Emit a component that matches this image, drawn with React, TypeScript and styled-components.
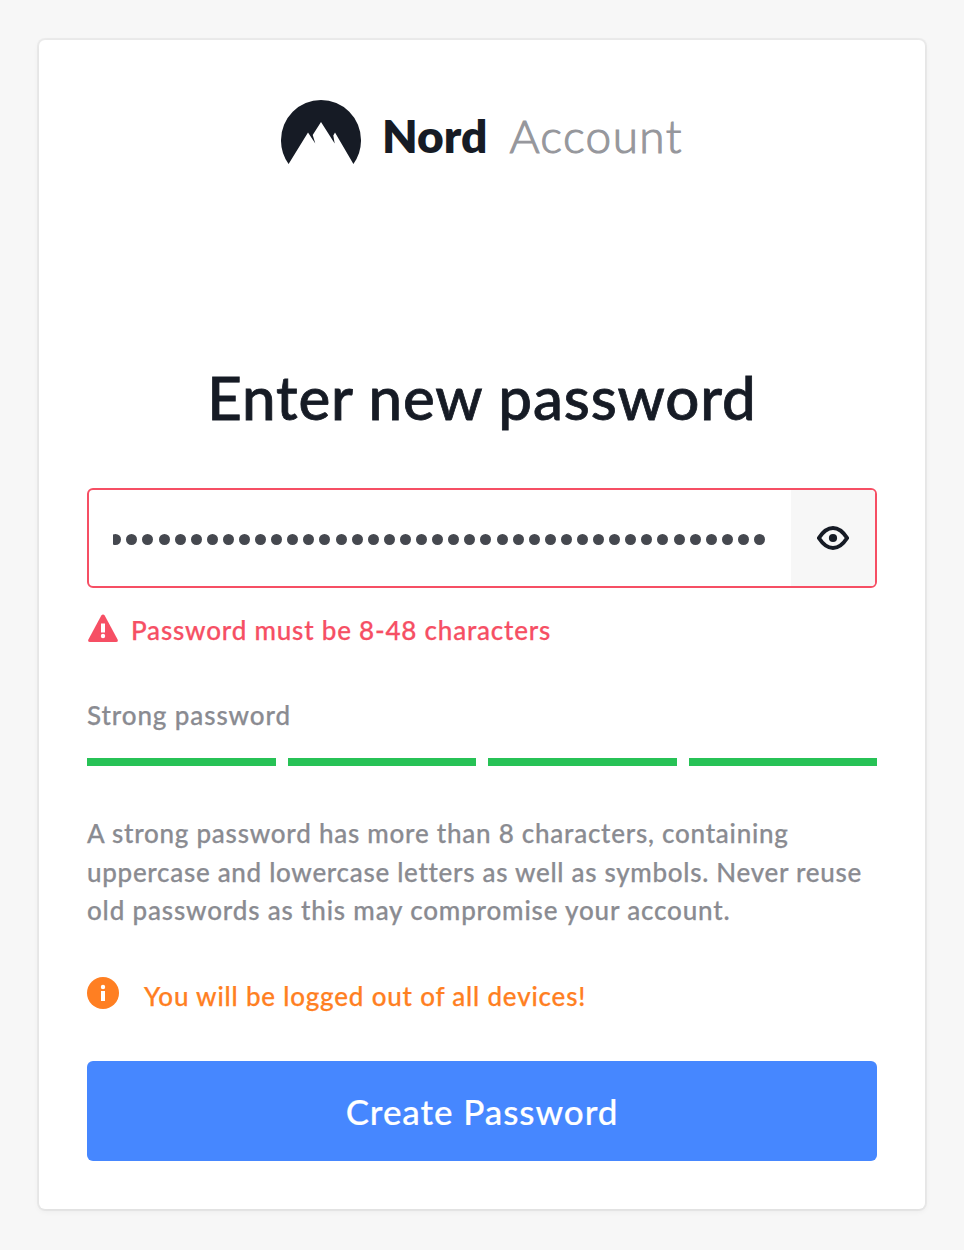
import React from "react";
import styled, { createGlobalStyle } from "styled-components";

const GlobalStyle = createGlobalStyle`
  *, *::before, *::after { box-sizing: border-box; }
  body {
    margin: 0;
    background: #f7f7f7;
    font-family: Lato, "Liberation Sans", sans-serif;
    color: #161b25;
    overflow: hidden;
  }
`;

const Page = styled.main`
  height: 1250px;
  padding: 40px 39px;
`;

const Card = styled.section`
  width: 886px;
  height: 1169px;
  padding: 60px 48px 48px;
  background: #fff;
  border-radius: 6px;
  box-shadow: 0 0 0 2px rgba(0, 0, 0, 0.045), 0 2px 6px rgba(0, 0, 0, 0.06);
`;

const Brand = styled.header`
  display: flex;
  justify-content: flex-start;
  height: 64px;
  padding-left: 194px;
`;

const Line = styled.span<{ $spacing: number; $stroke?: number }>`
  display: inline-block;
  letter-spacing: ${(p) => p.$spacing}px;
  white-space: nowrap;
  -webkit-text-stroke: ${(p) => p.$stroke ?? 0.25}px currentColor;
`;

const BrandName = styled.span`
  margin-left: 21px;
  font-size: 46px;
  font-weight: 800;
  line-height: 72px;
`;

const BrandProduct = styled.span`
  margin-left: 22px;
  font-size: 46px;
  font-weight: 300;
  line-height: 72px;
  color: #96979c;
`;

const Title = styled.h1`
  margin: 197px 0 0;
  height: 72px;
  font-size: 60px;
  font-weight: 500;
  line-height: 72px;
  text-align: center;
`;

const Field = styled.div`
  display: flex;
  height: 100px;
  margin-top: 55px;
  border: 2px solid #f64f64;
  border-radius: 6px;
  overflow: hidden;
`;

const Dots = styled.div`
  display: flex;
  flex: 1;
  align-items: center;
  justify-content: flex-end;
  gap: 5.1px;
  margin: 2px 26px 0 24px;
  overflow: hidden;
`;

const Dot = styled.span`
  flex: none;
  width: 11px;
  height: 11px;
  border-radius: 50%;
  background: #45484f;
`;

const Reveal = styled.button`
  display: grid;
  place-items: center;
  width: 84px;
  padding: 0;
  border: 0;
  background: #f7f7f7;
`;

const ErrorRow = styled.div`
  display: flex;
  height: 38px;
  margin-top: 24px;
  color: #f64f64;
  font-size: 26px;
  font-weight: 500;
  line-height: 36px;
`;

const ErrorText = styled.span`
  margin-left: 12px;
`;

const Strength = styled.div`
  height: 38px;
  margin-top: 47px;
  color: #8a8b91;
  font-size: 26px;
  font-weight: 500;
  line-height: 36px;
`;

const Meter = styled.div`
  display: grid;
  grid-template-columns: repeat(4, 1fr);
  gap: 12px;
  height: 8px;
  margin-top: 23px;
`;

const Segment = styled.span`
  background: #27c256;
`;

const Hint = styled.p`
  margin: 48px 0 0;
  height: 117px;
  color: #8a8b91;
  font-size: 26px;
  font-weight: 500;
  line-height: 38.5px;
`;

const Notice = styled.div`
  display: flex;
  height: 38px;
  margin-top: 46px;
  color: #ff7f22;
  font-size: 26px;
  font-weight: 500;
  line-height: 38px;
`;

const NoticeText = styled.span`
  margin-left: 25px;
`;

const Submit = styled.button`
  display: block;
  width: 100%;
  height: 100px;
  margin-top: 46px;
  padding: 0;
  border: 0;
  border-radius: 6px;
  background: #4687ff;
  color: #fff;
  font-family: inherit;
  font-size: 35px;
  font-weight: 500;
`;

const MountainLogo = () => (
  <svg width="80" height="64" viewBox="0 0 80 64" fill="#161b25">
    <path d="M7.6 64A40.2 40.2 0 0 1 0 40A40 40 0 0 1 80 40A40.2 40.2 0 0 1 72.4 64L54 32.6 52.3 35.5 53.7 43.5 40 22 31.7 35 34.3 43.5 27 32.6Z" />
  </svg>
);

const EyeIcon = () => (
  <svg width="32" height="24" viewBox="0 0 32 24" fill="none">
    <path d="M1.9 12C5.5 6.4 10 2 16 2s10.5 4.4 14.1 10C26.5 17.6 22 22 16 22S5.5 17.6 1.9 12Z" stroke="#161b25" strokeWidth="4" strokeLinejoin="round" />
    <circle cx="16" cy="12" r="4.1" fill="#161b25" />
  </svg>
);

const WarningIcon = () => (
  <svg width="32" height="30" viewBox="0 0 32 30">
    <path d="M14.3 1.5Q16 -.5 17.7 1.5L30.6 25.5Q31.5 28 29 28H3Q.5 28 1.4 25.5Z" fill="#f64f64" />
    <path d="M14 9.5H18V18.5H14Z" fill="#fff" />
    <circle cx="16" cy="22" r="2.2" fill="#fff" />
  </svg>
);

const WarningSlot = styled.span`
  display: block;
  width: 32px;
  padding-top: 2px;
  line-height: 0;
`;

const InfoIcon = () => (
  <svg width="32" height="32" viewBox="0 0 32 32">
    <circle cx="16" cy="16" r="16" fill="#ff7f22" />
    <circle cx="16" cy="10" r="2.2" fill="#fff" />
    <path d="M14 14H18V24H14Z" fill="#fff" />
  </svg>
);

export default function App() {
  return (
    <>
      <GlobalStyle />
      <Page>
        <Card>
          <Brand>
            <MountainLogo />
            <BrandName><Line $spacing={0} $stroke={0}>Nord</Line></BrandName>
            <BrandProduct><Line $spacing={1.4} $stroke={1.1}>Account</Line></BrandProduct>
          </Brand>
          <Title><Line $spacing={0.85} $stroke={0.8}>Enter new password</Line></Title>
          <Field>
            <Dots>
              {Array.from({ length: 41 }, (_, i) => <Dot key={i} />)}
            </Dots>
            <Reveal aria-label="Show password"><EyeIcon /></Reveal>
          </Field>
          <ErrorRow>
            <WarningSlot><WarningIcon /></WarningSlot>
            <ErrorText><Line $spacing={0.8}>Password must be 8-48 characters</Line></ErrorText>
          </ErrorRow>
          <Strength><Line $spacing={0.9}>Strong password</Line></Strength>
          <Meter>
            <Segment /><Segment /><Segment /><Segment />
          </Meter>
          <Hint>
            <Line $spacing={0.76}>A strong password has more than 8 characters, containing</Line>
            <Line $spacing={0.7}>uppercase and lowercase letters as well as symbols. Never reuse</Line>
            <Line $spacing={0.83}>old passwords as this may compromise your account.</Line>
          </Hint>
          <Notice>
            <InfoIcon />
            <NoticeText><Line $spacing={0.8}>You will be logged out of all devices!</Line></NoticeText>
          </Notice>
          <Submit><Line $spacing={0.93} $stroke={0.2}>Create Password</Line></Submit>
        </Card>
      </Page>
    </>
  );
}
